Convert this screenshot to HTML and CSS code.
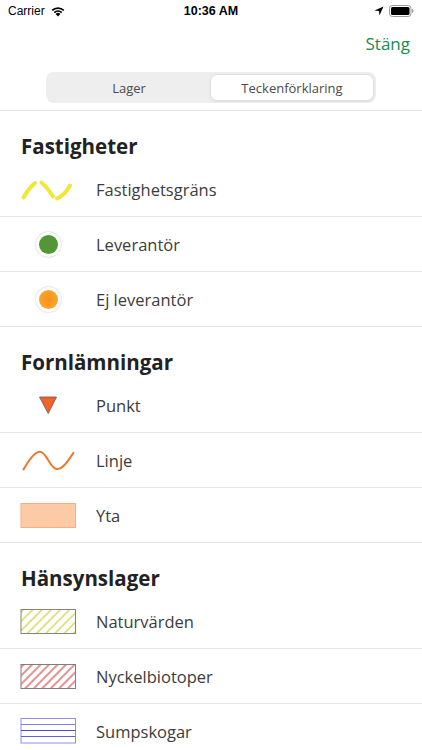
FILE: index.html
```html
<!DOCTYPE html>
<html lang="sv">
<head>
<meta charset="utf-8">
<title>Teckenförklaring</title>
<link rel="stylesheet" href="styles.css">
</head>
<body>
<div class="screen">
  <div class="statusbar">
    <div class="sb-left">
      <span class="carrier">Carrier</span>
      <svg class="wifi" width="16" height="12" viewBox="0 0 16 12">
        <path d="M8 11.5 L5.6 8.9 A3.4 3.4 0 0 1 10.4 8.9 Z" fill="#000"/>
        <path d="M3.7 7 A6.2 6.2 0 0 1 12.3 7 L11.1 8.3 A4.5 4.5 0 0 0 4.9 8.3 Z" fill="#000"/>
        <path d="M1.6 4.8 A9.2 9.2 0 0 1 14.4 4.8 L13.2 6.1 A7.5 7.5 0 0 0 2.8 6.1 Z" fill="#000"/>
      </svg>
    </div>
    <div class="sb-time">10:36 AM</div>
    <div class="sb-right">
      <svg class="loc" width="10" height="10" viewBox="0 0 10 10">
        <path d="M9.5 0.5 L0.5 4.6 L5 5 L5.4 9.5 Z" fill="#000"/>
      </svg>
      <svg class="battery" width="25" height="12" viewBox="0 0 25 12">
        <rect x="0.5" y="0.5" width="21.5" height="11" rx="2.8" fill="none" stroke="#9a9a9a"/>
        <rect x="2" y="2" width="18.5" height="8" rx="1.5" fill="#000"/>
        <path d="M23 4 Q24.5 4 24.5 6 Q24.5 8 23 8 Z" fill="#9a9a9a"/>
      </svg>
    </div>
  </div>

  <div class="navbar">
    <span class="close">Stäng</span>
  </div>

  <div class="segment-wrap">
    <div class="segment">
      <div class="seg">Lager</div>
      <div class="seg seg-active">Teckenförklaring</div>
    </div>
  </div>

  <div class="section">
    <div class="section-title">Fastigheter</div>
    <div class="row">
      <div class="icon">
        <svg width="56" height="26" viewBox="20 175 56 26">
          <g fill="none" stroke="#efe73a" stroke-width="4" stroke-linecap="round">
            <path d="M23.5 196.5 Q28 188 35 182"/>
            <path d="M41.5 181.5 Q47 186 53 195.5"/>
            <path d="M57 197.5 Q65 194 70 184.5"/>
          </g>
        </svg>
      </div>
      <div class="label">Fastighetsgräns</div>
    </div>
    <div class="row">
      <div class="icon">
        <span class="dot dot-green"></span>
      </div>
      <div class="label">Leverantör</div>
    </div>
    <div class="row">
      <div class="icon">
        <span class="dot dot-orange"></span>
      </div>
      <div class="label">Ej leverantör</div>
    </div>
  </div>

  <div class="section">
    <div class="section-title">Fornlämningar</div>
    <div class="row">
      <div class="icon">
        <svg width="20" height="20" viewBox="0 0 20 20">
          <path d="M1.5 2 L18.5 2 L10.2 18.5 Z" fill="#f4622a" stroke="#5a5a5a" stroke-width="0.8" stroke-linejoin="round"/>
        </svg>
      </div>
      <div class="label">Punkt</div>
    </div>
    <div class="row">
      <div class="icon">
        <svg width="56" height="24" viewBox="20 448 56 24">
          <path d="M23.5 469.5 C30 458 35 451.5 40 451.7 C47 452 50 469 57 469 C63 469 68 461 73.5 452.8" fill="none" stroke="#ea7a2c" stroke-width="2" stroke-linecap="round"/>
        </svg>
      </div>
      <div class="label">Linje</div>
    </div>
    <div class="row">
      <div class="icon">
        <svg width="56" height="25" viewBox="0 0 56 25">
          <rect x="1" y="0.5" width="54.5" height="24" fill="#fdcaa8" stroke="#f6ad84" stroke-width="1"/>
        </svg>
      </div>
      <div class="label">Yta</div>
    </div>
  </div>

  <div class="section">
    <div class="section-title">Hänsynslager</div>
    <div class="row">
      <div class="icon">
        <svg width="56" height="25" viewBox="0 0 56 25">
          <defs>
            <pattern id="hatchY" width="6.5" height="6.5" patternUnits="userSpaceOnUse" patternTransform="rotate(45)">
              <line x1="3" y1="-1" x2="3" y2="8" stroke="#d2d64a" stroke-width="1.3"/>
            </pattern>
          </defs>
          <rect x="1" y="0.5" width="54.5" height="24" fill="url(#hatchY)" stroke="#84847a" stroke-width="1"/>
        </svg>
      </div>
      <div class="label">Naturvärden</div>
    </div>
    <div class="row">
      <div class="icon">
        <svg width="56" height="25" viewBox="0 0 56 25">
          <defs>
            <pattern id="hatchR" width="6" height="6" patternUnits="userSpaceOnUse" patternTransform="rotate(45)">
              <line x1="3" y1="-1" x2="3" y2="7" stroke="#cf3a3c" stroke-width="1.1"/>
            </pattern>
          </defs>
          <rect x="1" y="0.5" width="54.5" height="24" fill="url(#hatchR)" stroke="#847c7c" stroke-width="1"/>
        </svg>
      </div>
      <div class="label">Nyckelbiotoper</div>
    </div>
    <div class="row">
      <div class="icon">
        <svg width="56" height="26" viewBox="0 0 56 26">
          <rect x="1" y="0.5" width="54.5" height="24.5" fill="#fff" stroke="#8c8cf0" stroke-width="1"/>
          <line x1="1" y1="6.5" x2="55.5" y2="6.5" stroke="#8080ee" stroke-width="1"/>
          <line x1="1" y1="12.5" x2="55.5" y2="12.5" stroke="#4a4ad0" stroke-width="1"/>
          <line x1="1" y1="18.5" x2="55.5" y2="18.5" stroke="#6060dc" stroke-width="1"/>
        </svg>
      </div>
      <div class="label">Sumpskogar</div>
    </div>
  </div>
</div>
</body>
</html>
```

FILE: styles.css
```css
* { box-sizing: border-box; }

html, body {
  margin: 0;
  padding: 0;
  background: #fff;
}

body {
  font-family: "Open Sans", "Noto Sans", "Lato", sans-serif;
  color: #3b3b3b;
  width: 422px;
  overflow: hidden;
}

.screen {
  width: 422px;
}

.statusbar {
  height: 22px;
  display: flex;
  align-items: center;
  justify-content: space-between;
  padding: 0 8px;
  position: relative;
  font-family: "Liberation Sans", "Roboto", sans-serif;
  color: #000;
}

.sb-left {
  display: flex;
  align-items: center;
  gap: 5px;
  font-size: 12px;
}

.wifi { margin-top: -1px; }

.sb-time {
  position: absolute;
  left: 0;
  right: 0;
  text-align: center;
  font-size: 12.5px;
  font-weight: 700;
  pointer-events: none;
}

.sb-right {
  display: flex;
  align-items: center;
  gap: 5px;
}

.navbar {
  height: 42px;
  display: flex;
  align-items: center;
  justify-content: flex-end;
  padding-right: 12px;
}

.close {
  color: #1d8a4d;
  font-size: 17px;
}

.segment-wrap {
  padding: 8px 46px 7px 46px;
  border-bottom: 1px solid #e7e7e7;
}

.segment {
  height: 31px;
  background: #eeeeef;
  border-radius: 8px;
  display: flex;
  padding: 2px;
}

.seg {
  flex: 1;
  display: flex;
  align-items: center;
  justify-content: center;
  font-size: 13px;
  color: #4a4a4a;
  border-radius: 7px;
}

.seg-active {
  background: #fff;
  border: 1px solid #dedede;
  box-shadow: 0 1px 2px rgba(0,0,0,0.06);
}

.section-title {
  height: 51px;
  padding: 22px 0 0 21px;
  line-height: 26px;
  font-size: 20.5px;
  font-weight: 700;
  color: #222;
}

.row {
  height: 55px;
  display: flex;
  align-items: center;
  border-bottom: 1px solid #e7e7e7;
}

.icon {
  width: 56px;
  margin-left: 20px;
  margin-right: 20px;
  display: flex;
  align-items: center;
  justify-content: center;
}

.icon svg { display: block; }

.label {
  font-size: 16.5px;
  color: #3c3c3c;
}

.dot {
  display: block;
  width: 25px;
  height: 25px;
  border-radius: 50%;
  background: #fff;
  box-shadow: 0 0 2px rgba(0,0,0,0.28);
  position: relative;
}

.dot::after {
  content: "";
  position: absolute;
  left: 3px;
  top: 3px;
  width: 19px;
  height: 19px;
  border-radius: 50%;
}

.dot-green::after {
  background: radial-gradient(circle, #5a8f43 0%, #4f9a31 55%, #4a962c 100%);
}

.dot-orange::after {
  background: radial-gradient(circle, #f98f1c 0%, #faa228 60%, #fbb133 100%);
}
```
